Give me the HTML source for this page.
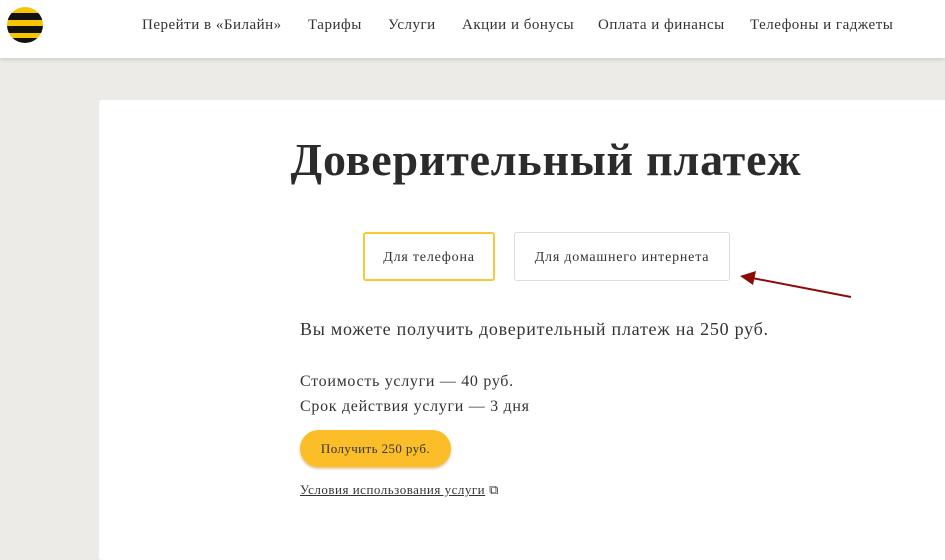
<!DOCTYPE html>
<html><head><meta charset="utf-8"><style>
body{margin:0;width:945px;height:544px;overflow:hidden;background:#ecebe7;font-family:"Liberation Serif",serif;color:#333;position:relative}
.hdr{position:absolute;left:0;top:0;width:945px;height:58px;background:#fff;box-shadow:0 2px 4px rgba(0,0,0,.12)}
.logo{position:absolute;left:7px;top:7px;width:36px;height:36px;border-radius:50%;overflow:hidden;background:linear-gradient(#f7c500 0,#f7c500 6px,#111 6px,#111 13px,#f7c500 13px,#f7c500 19px,#111 19px,#111 26px,#f7c500 26px,#f7c500 31px,#111 31px)}
.nav{position:absolute;top:17px;font-size:15px;color:#333;letter-spacing:0.5px}
.card{position:absolute;left:99px;top:100px;width:860px;height:460px;background:#fff;border-radius:3px}
h1{position:absolute;left:0;top:133px;width:1092px;text-align:center;margin:0;font-size:46px;font-weight:bold;color:#2b2b2b;letter-spacing:0.8px}
.tab{position:absolute;top:232px;height:49px;box-sizing:border-box;border:1px solid #ddd;border-radius:3px;font-size:14px;line-height:49px;text-align:center;color:#333;letter-spacing:0.8px}
.t{position:absolute;left:300px;font-size:17px;color:#333}
.btn{position:absolute;left:300px;top:430px;width:151px;height:37px;border-radius:19px;background:#fbbd28;box-shadow:0 2px 2px rgba(180,120,0,.4);font-size:13px;line-height:37px;text-align:center;color:#333;letter-spacing:0.4px}
</style></head><body>
<div class="hdr"><div class="logo"></div>
<span class="nav" style="left:142px">Перейти в «Билайн»</span>
<span class="nav" style="left:308px">Тарифы</span>
<span class="nav" style="left:388px">Услуги</span>
<span class="nav" style="left:462px">Акции и бонусы</span>
<span class="nav" style="left:598px">Оплата и финансы</span>
<span class="nav" style="left:750px">Телефоны и гаджеты</span>
</div>
<div class="card"></div>
<h1>Доверительный платеж</h1>
<div class="tab" style="left:363px;width:132px;border:2px solid #f7c93a;line-height:47px">Для телефона</div>
<div class="tab" style="left:514px;width:216px">Для домашнего интернета</div>
<svg style="position:absolute;left:0;top:0" width="945" height="544"><line x1="851" y1="297" x2="752" y2="278" stroke="#8b0b0b" stroke-width="2"/><polygon points="740,276 756,271 753,285" fill="#8b0b0b"/></svg>
<div class="t" style="top:319px;font-size:18px;letter-spacing:0.75px">Вы можете получить доверительный платеж на 250 руб.</div>
<div class="t" style="top:373px;font-size:16px;letter-spacing:0.7px">Стоимость услуги — 40 руб.</div>
<div class="t" style="top:398px;font-size:16px;letter-spacing:0.7px">Срок действия услуги — 3 дня</div>
<div class="btn">Получить 250 руб.</div>
<div class="t" style="top:482px;font-size:13px;text-decoration:underline;letter-spacing:0.5px">Условия использования услуги<span style="text-decoration:none;display:inline-block;margin-left:4px">⧉</span></div>
</body></html>
